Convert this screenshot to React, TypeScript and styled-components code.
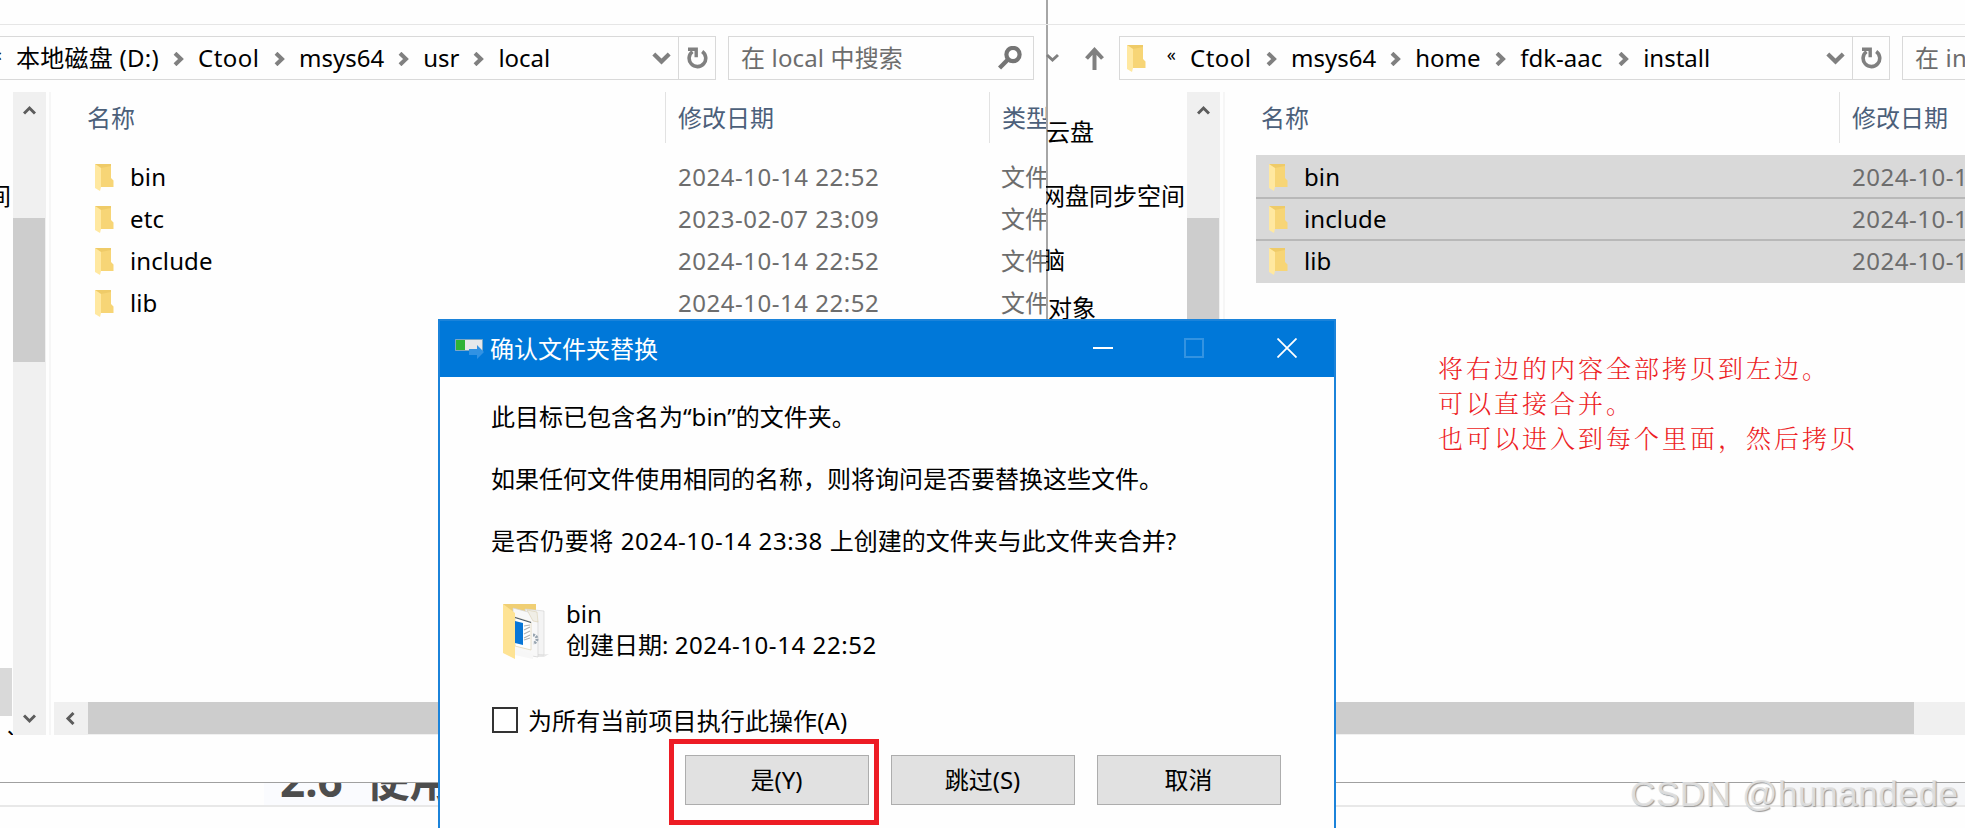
import { Fragment } from 'react';
import styled, { createGlobalStyle } from 'styled-components';

const GlobalStyle = createGlobalStyle`
  * {
    box-sizing: border-box;
  }
  body {
    margin: 0;
    overflow: hidden;
    background: #fefefe;
    color: #000;
    font-family: 'Noto Sans', 'Noto Sans CJK SC', sans-serif;
    font-size: 24px;
    font-weight: 400;
  }
  p {
    margin: 0;
  }
  svg {
    display: block;
    flex-shrink: 0;
  }
`;

const Desktop = styled.div`
  position: relative;
  width: 1965px;
  height: 828px;
  overflow: hidden;
  background: #fefefe;
`;

const Windows = styled.div`
  display: flex;
  height: 783px;
  border-bottom: 1px solid #a0a0a0;
`;

const Window = styled.section<{ $width: number; $edge?: boolean }>`
  display: flex;
  flex-direction: column;
  flex: 0 0 ${(p) => p.$width}px;
  height: 782px;
  overflow: hidden;
  background: #fefefe;
  box-shadow: ${(p) => (p.$edge ? 'inset 2px 0 0 #a6a6a6' : 'none')};
`;

const Ribbon = styled.div`
  height: 25px;
  border-bottom: 1px solid #e6e6e6;
`;

const Toolbar = styled.div`
  display: flex;
  align-items: center;
  height: 44px;
  margin: 11px 0 12px;
`;

const NavButtons = styled.div`
  display: flex;
  align-items: center;
  flex: 0 0 73px;
  gap: 26px;
`;

const AddressBar = styled.div<{ $width: number; $cut?: boolean }>`
  display: flex;
  align-items: center;
  flex: 0 0 ${(p) => p.$width}px;
  height: 44px;
  border: 1px solid #d9d9d9;
  border-left-width: ${(p) => (p.$cut ? 0 : 1)}px;
  padding-left: ${(p) => (p.$cut ? 0 : 7)}px;
`;

const Overflow = styled.span<{ $cut?: boolean }>`
  width: ${(p) => (p.$cut ? 16 : 44)}px;
  padding-right: 14px;
  padding-bottom: 8px;
  display: flex;
  justify-content: flex-end;
  font-size: 18px;
  line-height: 30px;
`;

const Crumb = styled.span<{ $width: number; $spacing?: number }>`
  flex: 0 0 ${(p) => p.$width}px;
  letter-spacing: ${(p) => p.$spacing ?? 0}px;
  line-height: 42px;
  white-space: nowrap;
`;

const CrumbArrow = styled.span`
  display: flex;
  justify-content: center;
  flex: 0 0 39px;
  padding-top: 2px;
`;

const DropArrow = styled.span`
  display: flex;
  margin-left: auto;
  padding-right: 7px;
`;

const Refresh = styled.span<{ $width: number }>`
  display: flex;
  align-items: center;
  justify-content: center;
  flex: 0 0 ${(p) => p.$width}px;
  height: 42px;
  border-left: 1px solid #d9d9d9;
`;

const SearchBox = styled.div`
  display: flex;
  align-items: center;
  justify-content: space-between;
  flex: 0 0 306px;
  height: 44px;
  margin-left: 12px;
  padding: 0 11px 0 12px;
  border: 1px solid #d9d9d9;
  color: #6d6d6d;
  letter-spacing: 0.15px;
  line-height: 42px;
  white-space: nowrap;
`;

const SearchHint = styled.span`
  height: 42px;
`;

const Body = styled.div`
  display: flex;
  height: 643px;
`;

const NavPane = styled.div<{ $width: number }>`
  display: flex;
  flex-direction: column;
  align-items: flex-start;
  flex: 0 0 ${(p) => p.$width}px;
  overflow: hidden;
`;

const NavItem = styled.span<{ $top: number; $shift: number }>`
  flex-shrink: 0;
  height: 24px;
  line-height: 24px;
  margin-top: ${(p) => p.$top}px;
  margin-left: ${(p) => p.$shift}px;
  white-space: nowrap;
`;

const NavSelected = styled.div`
  flex-shrink: 0;
  width: 12px;
  height: 48px;
  margin-top: 460px;
  background: #d9d9d9;
`;

const VerticalScroll = styled.div`
  display: flex;
  flex-direction: column;
  align-items: center;
  justify-content: space-between;
  flex: 0 0 33px;
  padding: 12px 0 10px;
  background: #f0f0f0;
`;

const VerticalThumb = styled.div`
  width: 32px;
  height: 144px;
  margin: 101px 1px auto 0;
  background: #cdcdcd;
`;

const Splitter = styled.div`
  flex: 0 0 2px;
  margin: 0 3px;
  background: #f6f6f6;
`;

const FilePane = styled.div`
  display: flex;
  flex-direction: column;
  flex: 1;
  min-width: 0;
`;

const HeaderRow = styled.div`
  display: flex;
  height: 51px;
  margin-bottom: 12px;
  padding-left: 33px;
  color: #4c607a;
  line-height: 52px;
  white-space: nowrap;
`;

const HeaderCell = styled.span<{ $width: number }>`
  flex: 0 0 ${(p) => p.$width}px;
  border-right: 1px solid #e2e2e2;
  margin-right: 12px;
`;

/* rows overlap by 2px so that neighbours share one divider */
const FileRow = styled.div<{ $selected?: boolean; $divided?: boolean }>`
  display: flex;
  align-items: center;
  flex: 0 0 44px;
  margin: 0 0 -2px 28px;
  padding-left: 13px;
  line-height: 44px;
  white-space: nowrap;
  background: ${(p) => (p.$selected ? '#d9d9d9' : 'transparent')};
  box-shadow: ${(p) => (p.$divided ? 'inset 0 2px 0 #b8b8b8' : 'none')};
`;

const FileName = styled.span<{ $width: number }>`
  flex: 0 0 ${(p) => p.$width}px;
  padding-left: 16px;
  letter-spacing: 0.1px;
`;

const FileDate = styled.span`
  flex: 0 0 323px;
  color: #6d6d6d;
  letter-spacing: 0.52px;
`;

const FileKind = styled.span`
  color: #6d6d6d;
`;

const HorizontalScroll = styled.div`
  display: flex;
  height: 33px;
  margin-top: auto;
  background: #f0f0f0;
`;

const ScrollEnd = styled.div`
  display: flex;
  align-items: center;
  justify-content: center;
  flex: 0 0 34px;
  padding-right: 2px;
`;

const HorizontalThumb = styled.div<{ $width: number }>`
  flex: 0 0 ${(p) => p.$width}px;
  height: 32px;
  background: #cdcdcd;
`;

const PageStrip = styled.div`
  display: flex;
  justify-content: space-between;
  height: 24px;
  border-bottom: 2px solid #e8e8e8;
`;

const PageHeading = styled.div`
  display: flex;
  align-items: flex-end;
  width: 260px;
  height: 22px;
  margin-left: 264px;
  padding-left: 16px;
  overflow: hidden;
  background: #fafbfe;
  color: #4d4d4d;
  font-size: 44px;
  font-weight: 700;
  line-height: 50px;
  white-space: pre;
`;

const PageAside = styled.div`
  width: 179px;
  height: 22px;
  background: #f5f6f8;
`;

const Dialog = styled.div`
  position: absolute;
  left: 438px;
  top: 319px;
  width: 898px;
  height: 540px;
  border: 2px solid #1b83da;
  background: #fefefe;
`;

const TitleBar = styled.div`
  display: flex;
  align-items: center;
  height: 56px;
  padding: 0 37px 0 15px;
  background: #0078d9;
  color: #fff;
`;

const Title = styled.span`
  margin-left: 6px;
  height: 57px;
  line-height: 56px;
`;

const TitleButtons = styled.div`
  display: flex;
  margin-left: auto;
  padding-bottom: 2px;
`;

const TitleButton = styled.span<{ $gap: number }>`
  margin-left: ${(p) => p.$gap}px;
`;

const DialogBody = styled.div`
  padding: 9px 53px 0 52px;
`;

const Message = styled.p`
  margin-left: -1px;
  line-height: 62px;
  white-space: nowrap;
`;

const Stamp = styled.span`
  letter-spacing: 0.58px;
`;

const Item = styled.div`
  display: flex;
  align-items: center;
  margin-top: 28px;
  padding-left: 11px;
  height: 62px;
`;

const ItemText = styled.div`
  margin-left: 17px;
  padding-bottom: 5px;
  line-height: 31px;
`;

const ApplyAll = styled.label`
  display: flex;
  align-items: center;
  gap: 10px;
  height: 34px;
  margin-top: 42px;
  letter-spacing: 0.1px;
  line-height: 34px;
`;

const Checkbox = styled.span`
  width: 26px;
  height: 26px;
  margin-bottom: 3px;
  border: 2px solid #333;
  background: #fff;
`;

const Actions = styled.div`
  display: flex;
  justify-content: flex-end;
  gap: 22px;
  margin-top: 17px;
`;

const ActionButton = styled.button`
  position: relative;
  width: 184px;
  height: 50px;
  padding: 0 1px 0 0;
  border: 1px solid #adadad;
  background: #e1e1e1;
  color: #000;
  font: inherit;
  line-height: 48px;
`;

const Highlight = styled.span`
  position: absolute;
  left: -17px;
  top: -17px;
  width: 210px;
  height: 86px;
  border: 5px solid #ed1c24;
`;

const Note = styled.div`
  position: absolute;
  left: 1438px;
  top: 350px;
  color: #ed1c24;
  font-family: 'Noto Serif CJK SC', 'Noto Sans CJK SC', serif;
  font-size: 25px;
  font-weight: 300;
  letter-spacing: 3px;
  line-height: 35px;
  white-space: nowrap;
`;

const Watermark = styled.div`
  position: absolute;
  left: 1630px;
  top: 770px;
  color: rgba(226, 226, 226, 0.92);
  font-family: 'Liberation Sans', Arial, sans-serif;
  font-size: 35px;
  line-height: 48px;
  letter-spacing: 0.6px;
  text-shadow: 1px 1px 1px #9a9a9a;
  white-space: nowrap;
`;

const FolderIcon = () => (
  <svg width="19" height="27" viewBox="0 0 19 27">
    <path d="M0 0h16v14l2.500 2.500V23H5z" fill="#f7d576" />
    <path d="M0 0h16v2L6 4z" fill="#efcb68" />
    <path d="M0 0l6 4v19l-1 4-5-3z" fill="#ffe8a0" />
  </svg>
);

const ChevronRight = () => (
  <svg width="11" height="14" viewBox="0 0 11 14" fill="none" stroke="#808080" strokeWidth="4">
    <path d="M2 1.200l6 5.800-6 5.800" />
  </svg>
);

const ChevronDown = () => (
  <svg width="19" height="14" viewBox="0 0 19 14" fill="none" stroke="#808080" strokeWidth="4.200">
    <path d="M1.800 3l7.700 7.500L17.200 3" />
  </svg>
);

const RefreshIcon = () => (
  <svg width="21" height="23" viewBox="0 0 21 23" fill="none" stroke="#808080">
    <path d="M15.200 4.500a8.300 8.300 0 1 1-9.700.1" strokeWidth="3.600" />
    <path d="M1 2.200h8.200v8" strokeWidth="3.400" />
  </svg>
);

const SearchIcon = () => (
  <svg width="24" height="24" viewBox="0 0 24 24" fill="none" stroke="#757575">
    <circle cx="15" cy="8.500" r="6.600" strokeWidth="4.200" />
    <path d="M10 13.500L1.500 22" strokeWidth="4.400" />
  </svg>
);

const turns = { up: 0, right: 90, down: 180, left: 270 };

const ScrollArrow = ({ to }: { to: keyof typeof turns }) => (
  <svg width="13" height="13" viewBox="0 0 13 13" fill="none" stroke="#5c5c5c" strokeWidth="3">
    <path d="M1 9.500l5.500-5.500L12 9.500" transform={`rotate(${turns[to]} 6.5 6.5)`} />
  </svg>
);

const MoveIcon = () => (
  <svg width="29" height="22" viewBox="0 0 29 22">
    <path d="M.5 1.500h27v11H.5z" fill="#e6e8ea" stroke="#7ba7c4" />
    <path d="M1 2h9v10H1z" fill="#2fb336" />
    <path d="M14 11h8V7l7 7-7 7v-4h-8z" fill="#3192e3" />
  </svg>
);

const FolderWithFiles = () => (
  <svg width="46" height="57" viewBox="0 0 46 57">
    <path d="M33 52l13-1-5 3H31z" fill="#e8e8e8" />
    <path d="M0 1h33v46H8z" fill="#f0cf74" />
    <path d="M22 6l19 2v44l-12-1z" fill="#f4f4f4" stroke="#d6d6d6" strokeWidth=".7" />
    <path d="M10 5l19 5 6 9v35L10 50z" fill="#f8f8f8" stroke="#d3d3d3" strokeWidth=".7" />
    <path d="M24 7l10 2 1 10-5-1z" fill="#f0eee6" stroke="#d8cfb1" strokeWidth=".6" />
    <path d="M12 14l16 5v28l-16-4z" fill="#fff" stroke="#d7caa5" strokeWidth=".6" />
    <path d="M12 14.500l16 5" stroke="#4b5a69" strokeWidth="1.300" />
    <path d="M12 18l8 2v22l-8-2z" fill="#0876d7" />
    <path d="M21 23l6-1M21 27l6-3M21 31l6-3M21 35l6-3M21 37l6-2" stroke="#b5b5b5" strokeWidth="1.200" />
    <path d="M30 32a4 4 0 0 1 0 8" fill="none" stroke="#98a5b0" strokeWidth="3" strokeDasharray="2 1" />
    <path d="M0 1l12 9v46L0 50z" fill="#fee394" />
    <path d="M12 46l18 5v5l-18-4z" fill="#f7f7f7" />
  </svg>
);

interface CrumbItem {
  label: string;
  width: number;
  spacing?: number;
}

const localPath: CrumbItem[] = [
  { label: '本地磁盘 (D:)', width: 143, spacing: 0.25 },
  { label: 'Ctool', width: 62, spacing: 0.5 },
  { label: 'msys64', width: 85 },
  { label: 'usr', width: 35 },
  { label: 'local', width: 52 },
];

const installPath: CrumbItem[] = [
  { label: 'Ctool', width: 62, spacing: 0.5 },
  { label: 'msys64', width: 85 },
  { label: 'home', width: 66 },
  { label: 'fdk-aac', width: 84 },
  { label: 'install', width: 65 },
];

const localFiles = [
  { name: 'bin', date: '2024-10-14 22:52' },
  { name: 'etc', date: '2023-02-07 23:09' },
  { name: 'include', date: '2024-10-14 22:52' },
  { name: 'lib', date: '2024-10-14 22:52' },
];

const installFiles = ['bin', 'include', 'lib'];

const Breadcrumbs = ({ items }: { items: CrumbItem[] }) => (
  <>
    {items.map((item, i) => (
      <Fragment key={item.label}>
        {i > 0 && (
          <CrumbArrow>
            <ChevronRight />
          </CrumbArrow>
        )}
        <Crumb $width={item.width} $spacing={item.spacing}>{item.label}</Crumb>
      </Fragment>
    ))}
    <DropArrow>
      <ChevronDown />
    </DropArrow>
  </>
);

const PaneScroll = () => (
  <VerticalScroll>
    <ScrollArrow to="up" />
    <VerticalThumb />
    <ScrollArrow to="down" />
  </VerticalScroll>
);

const LocalWindow = () => (
  <Window $width={1046}>
    <Ribbon />
    <Toolbar>
      <AddressBar $width={716} $cut>
        <Overflow $cut>«</Overflow>
        <Breadcrumbs items={localPath} />
        <Refresh $width={37}>
          <RefreshIcon />
        </Refresh>
      </AddressBar>
      <SearchBox>
        <SearchHint>在 local 中搜索</SearchHint>
        <SearchIcon />
      </SearchBox>
    </Toolbar>
    <Body>
      <NavPane $width={13}>
        <NavItem $top={92} $shift={-13}>间</NavItem>
        <NavSelected />
        <NavItem $top={13} $shift={1}>入</NavItem>
      </NavPane>
      <PaneScroll />
      <Splitter />
      <FilePane>
        <HeaderRow>
          <HeaderCell $width={579}>名称</HeaderCell>
          <HeaderCell $width={312}>修改日期</HeaderCell>
          类型
        </HeaderRow>
        {localFiles.map((file) => (
          <FileRow key={file.name}>
            <FolderIcon />
            <FileName $width={564}>{file.name}</FileName>
            <FileDate>{file.date}</FileDate>
            <FileKind>文件夹</FileKind>
          </FileRow>
        ))}
        <HorizontalScroll>
          <ScrollEnd>
            <ScrollArrow to="left" />
          </ScrollEnd>
          <HorizontalThumb $width={900} />
        </HorizontalScroll>
      </FilePane>
    </Body>
  </Window>
);

const InstallWindow = () => (
  <Window $width={919} $edge>
    <Ribbon />
    <Toolbar>
      <NavButtons>
        <svg width="13" height="10" viewBox="0 0 13 10" fill="none" stroke="#808080" strokeWidth="3">
          <path d="M1 2l5.500 5L12 2" />
        </svg>
        <svg width="19" height="24" viewBox="0 0 19 24" fill="none" stroke="#808080" strokeWidth="4">
          <path d="M9.500 25V4M1.500 12.500l8-8.500 8 8.500" />
        </svg>
      </NavButtons>
      <AddressBar $width={771}>
        <FolderIcon />
        <Overflow>«</Overflow>
        <Breadcrumbs items={installPath} />
        <Refresh $width={37}>
          <RefreshIcon />
        </Refresh>
      </AddressBar>
      <SearchBox>
        <SearchHint>在 install 中搜索</SearchHint>
        <SearchIcon />
      </SearchBox>
    </Toolbar>
    <Body>
      <NavPane $width={141}>
        <NavItem $top={28} $shift={0}>云盘</NavItem>
        <NavItem $top={40} $shift={-5}>网盘同步空间</NavItem>
        <NavItem $top={40} $shift={-5}>脑</NavItem>
        <NavItem $top={24} $shift={2}>对象</NavItem>
      </NavPane>
      <PaneScroll />
      <Splitter />
      <FilePane>
        <HeaderRow>
          <HeaderCell $width={579}>名称</HeaderCell>
          修改日期
        </HeaderRow>
        {installFiles.map((name, i) => (
          <FileRow key={name} $selected $divided={i > 0}>
            <FolderIcon />
            <FileName $width={564}>{name}</FileName>
            <FileDate>2024-10-14 22:52</FileDate>
          </FileRow>
        ))}
        <HorizontalScroll>
          <ScrollEnd>
            <ScrollArrow to="left" />
          </ScrollEnd>
          <HorizontalThumb $width={652} />
        </HorizontalScroll>
      </FilePane>
    </Body>
  </Window>
);

const ReplaceDialog = () => (
  <Dialog>
    <TitleBar>
      <MoveIcon />
      <Title>确认文件夹替换</Title>
      <TitleButtons>
        <svg width="20" height="20" viewBox="0 0 20 20">
          <path d="M0 9h20v2H0z" fill="#fff" />
        </svg>
        <TitleButton $gap={71}>
          <svg width="20" height="20" viewBox="0 0 20 20">
            <path d="M1 1h18v18H1z" fill="none" stroke="#3393e1" strokeWidth="2" />
          </svg>
        </TitleButton>
        <TitleButton $gap={73}>
          <svg width="20" height="20" viewBox="0 0 20 20">
            <path d="M.5.5l19 19M19.500.5l-19 19" stroke="#fff" strokeWidth="1.800" />
          </svg>
        </TitleButton>
      </TitleButtons>
    </TitleBar>
    <DialogBody>
      <Message>此目标已包含名为“bin”的文件夹。</Message>
      <Message>如果任何文件使用相同的名称，则将询问是否要替换这些文件。</Message>
      <Message>
        <Stamp>是否仍要将 2024-10-14 23:38 </Stamp>上创建的文件夹与此文件夹合并?
      </Message>
      <Item>
        <FolderWithFiles />
        <ItemText>
          <p>bin</p>
          <p>
            创建日期: <Stamp>2024-10-14 22:52</Stamp>
          </p>
        </ItemText>
      </Item>
      <ApplyAll>
        <Checkbox />
        为所有当前项目执行此操作(A)
      </ApplyAll>
      <Actions>
        <ActionButton>
          是(Y)
          <Highlight />
        </ActionButton>
        <ActionButton>跳过(S)</ActionButton>
        <ActionButton>取消</ActionButton>
      </Actions>
    </DialogBody>
  </Dialog>
);

export default function App() {
  return (
    <>
      <GlobalStyle />
      <Desktop>
        <Windows>
          <LocalWindow />
          <InstallWindow />
        </Windows>
        <PageStrip>
          <PageHeading>2.6  使用</PageHeading>
          <PageAside />
        </PageStrip>
        <Note>
          <p>将右边的内容全部拷贝到左边。</p>
          <p>可以直接合并。</p>
          <p>也可以进入到每个里面，然后拷贝</p>
        </Note>
        <ReplaceDialog />
        <Watermark>CSDN @hunandede</Watermark>
      </Desktop>
    </>
  );
}
